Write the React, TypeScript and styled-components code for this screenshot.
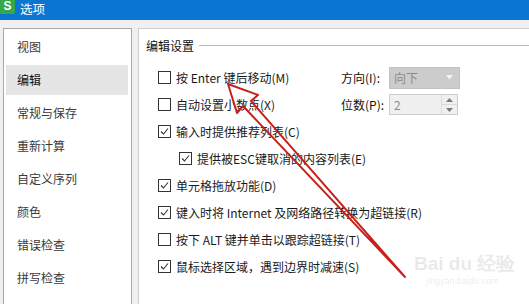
import styled, { createGlobalStyle } from 'styled-components';

const GlobalStyle = createGlobalStyle`
  html, body {
    margin: 0;
    padding: 0;
    background: #f0f0f0;
    overflow: hidden;
  }
  body {
    font-family: "Noto Sans CJK SC", "Noto Sans", sans-serif;
    font-size: 12px;
    color: #1a1a1a;
  }
`;

const navItems = ['视图', '编辑', '常规与保存', '重新计算', '自定义序列', '颜色', '错误检查', '拼写检查'];

type Option = { label: string; checked: boolean; indent?: boolean };

const options: Option[] = [
  { label: '按 Enter 键后移动(M)', checked: false },
  { label: '自动设置小数点(X)', checked: false },
  { label: '输入时提供推荐列表(C)', checked: true },
  { label: '提供被ESC键取消的内容列表(E)', checked: true, indent: true },
  { label: '单元格拖放功能(D)', checked: true },
  { label: '键入时将 Internet 及网络路径转换为超链接(R)', checked: true },
  { label: '按下 ALT 键并单击以跟踪超链接(T)', checked: false },
  { label: '鼠标选择区域，遇到边界时减速(S)', checked: true },
];

const Window = styled.div`
  position: relative;
  width: 529px;
  height: 304px;
  overflow: hidden;
  display: flex;
  flex-direction: column;
`;

const TitleBar = styled.div`
  height: 20px;
  background: #0b76d2;
  display: flex;
  align-items: flex-start;
  flex-shrink: 0;
`;

const AppIcon = styled.div`
  width: 15px;
  height: 14px;
  background: #35a84a;
  color: #fff;
  font-family: "Liberation Sans", sans-serif;
  font-weight: bold;
  font-size: 12px;
  line-height: 13px;
  text-align: center;
  border-radius: 0 0 2px 0;
`;

const Title = styled.span`
  color: #fff;
  font-size: 12.5px;
  line-height: 16px;
  margin: 1px 0 0 5px;
`;

const Body = styled.div`
  flex: 1;
  display: flex;
  gap: 6px;
  padding: 8px 0 0 3px;
  min-height: 0;
`;

const Sidebar = styled.div`
  width: 122px;
  background: #fff;
  border: 1px solid #a9a9a9;
  border-bottom: none;
  padding: 3px 3px 0 2px;
  display: flex;
  flex-direction: column;
  gap: 3px;
  flex-shrink: 0;
`;

const NavItem = styled.div<{ $active?: boolean }>`
  height: 30px;
  line-height: 30px;
  padding-left: 11px;
  color: ${(p) => (p.$active ? '#111' : '#3a3a3a')};
  background: ${(p) => (p.$active ? '#e5e5e5' : 'transparent')};
`;

const Panel = styled.div`
  flex: 1;
  background: #fff;
  border: 1px solid #cfcfcf;
  border-right: none;
  border-bottom: none;
  padding: 8px 0 0 7px;
`;

const GroupHeader = styled.div`
  display: flex;
  align-items: center;
  height: 16px;
  color: #111;
`;

const GroupLine = styled.div`
  flex: 1;
  height: 1px;
  background: #bdbdbd;
  margin-left: 5px;
`;

const List = styled.div`
  margin-top: 11px;
  padding-left: 12px;
  display: flex;
  flex-direction: column;
`;

const Row = styled.div<{ $indent?: boolean }>`
  height: 27px;
  display: flex;
  align-items: center;
  padding-left: ${(p) => (p.$indent ? '21px' : '0')};
`;

const FieldRow = styled.div`
  height: 27px;
  display: grid;
  grid-template-columns: 183px auto;
  align-items: center;
`;

const CheckLabel = styled.label`
  display: flex;
  align-items: center;
  gap: 5px;
  white-space: nowrap;
`;

const Box = styled.span`
  width: 11px;
  height: 11px;
  border: 1px solid #333;
  background: #fff;
  display: inline-flex;
  align-items: center;
  justify-content: center;
  flex-shrink: 0;
`;

const Field = styled.div`
  display: flex;
  align-items: center;
`;

const FieldLabel = styled.span`
  width: 48px;
  color: #111;
`;

const SelectBox = styled.div`
  width: 59px;
  height: 20px;
  border: 1px solid #c2c2c2;
  background: #cccccc;
  color: #8c8c8c;
  display: flex;
  align-items: center;
  justify-content: space-between;
  padding: 0 6px 0 4px;
`;

const SpinBox = styled.div`
  width: 67px;
  height: 19px;
  border: 1px solid #cdcdcd;
  background: #f0f0f0;
  color: #8c8c8c;
  display: flex;
  align-items: stretch;
`;

const SpinValue = styled.span`
  flex: 1;
  padding-left: 4px;
  line-height: 19px;
`;

const SpinButtons = styled.div`
  width: 15px;
  border-left: 1px solid #dadada;
  display: flex;
  flex-direction: column;
`;

const SpinButton = styled.div<{ $top?: boolean }>`
  flex: 1;
  display: flex;
  align-items: center;
  justify-content: center;
  border-bottom: ${(p) => (p.$top ? '1px solid #dadada' : 'none')};
`;

const Overlay = styled.svg`
  position: absolute;
  left: 0;
  top: 0;
  pointer-events: none;
`;

const Watermark = styled.div`
  position: absolute;
  left: 414px;
  top: 254px;
  color: rgba(120, 120, 120, 0.16);
  font-family: "Liberation Sans", sans-serif;
  line-height: 1;
  white-space: nowrap;
`;

const MarkTop = styled.div`
  font-size: 19px;
  font-weight: bold;
`;

const MarkBottom = styled.div`
  font-size: 9px;
  margin-top: 4px;
  padding-left: 12px;
`;

const Checkbox = ({ checked }: { checked: boolean }) => (
  <Box>
    {checked && (
      <svg width="9" height="9" viewBox="0 0 9 9">
        <path d="M1 4.5 L3.5 7 L8 1.5" fill="none" stroke="#333" strokeWidth="1.1" />
      </svg>
    )}
  </Box>
);

const Option = ({ o }: { o: Option }) => (
  <CheckLabel>
    <Checkbox checked={o.checked} />
    {o.label}
  </CheckLabel>
);

export default function App() {
  return (
    <Window>
      <GlobalStyle />
      <TitleBar>
        <AppIcon>S</AppIcon>
        <Title>选项</Title>
      </TitleBar>
      <Body>
        <Sidebar>
          {navItems.map((n) => (
            <NavItem key={n} $active={n === '编辑'}>
              {n}
            </NavItem>
          ))}
        </Sidebar>
        <Panel>
          <GroupHeader>
            编辑设置
            <GroupLine />
          </GroupHeader>
          <List>
            <FieldRow>
              <Option o={options[0]} />
              <Field>
                <FieldLabel>方向(I):</FieldLabel>
                <SelectBox>
                  向下
                  <svg width="7" height="5" viewBox="0 0 7 5">
                    <path d="M0 0 H7 L3.5 4.5 Z" fill="#f4f4f4" />
                  </svg>
                </SelectBox>
              </Field>
            </FieldRow>
            <FieldRow>
              <Option o={options[1]} />
              <Field>
                <FieldLabel>位数(P):</FieldLabel>
                <SpinBox>
                  <SpinValue>2</SpinValue>
                  <SpinButtons>
                    <SpinButton $top>
                      <svg width="7" height="4" viewBox="0 0 7 4">
                        <path d="M0 4 H7 L3.5 0 Z" fill="#7a7a7a" />
                      </svg>
                    </SpinButton>
                    <SpinButton>
                      <svg width="7" height="4" viewBox="0 0 7 4">
                        <path d="M0 0 H7 L3.5 4 Z" fill="#7a7a7a" />
                      </svg>
                    </SpinButton>
                  </SpinButtons>
                </SpinBox>
              </Field>
            </FieldRow>
            {options.slice(2).map((o) => (
              <Row key={o.label} $indent={o.indent}>
                <Option o={o} />
              </Row>
            ))}
          </List>
        </Panel>
      </Body>
      <Watermark>
        <MarkTop>Bai du 经验</MarkTop>
        <MarkBottom>jingyan.baidu.com</MarkBottom>
      </Watermark>
      <Overlay width="529" height="304" viewBox="0 0 529 304">
        <path
          d="M228 84 L258 95 L251 101 L405 277 L243 106 L237 113 Z"
          fill="none"
          stroke="#c8201c"
          strokeWidth="2"
          strokeLinejoin="round"
        />
      </Overlay>
    </Window>
  );
}
